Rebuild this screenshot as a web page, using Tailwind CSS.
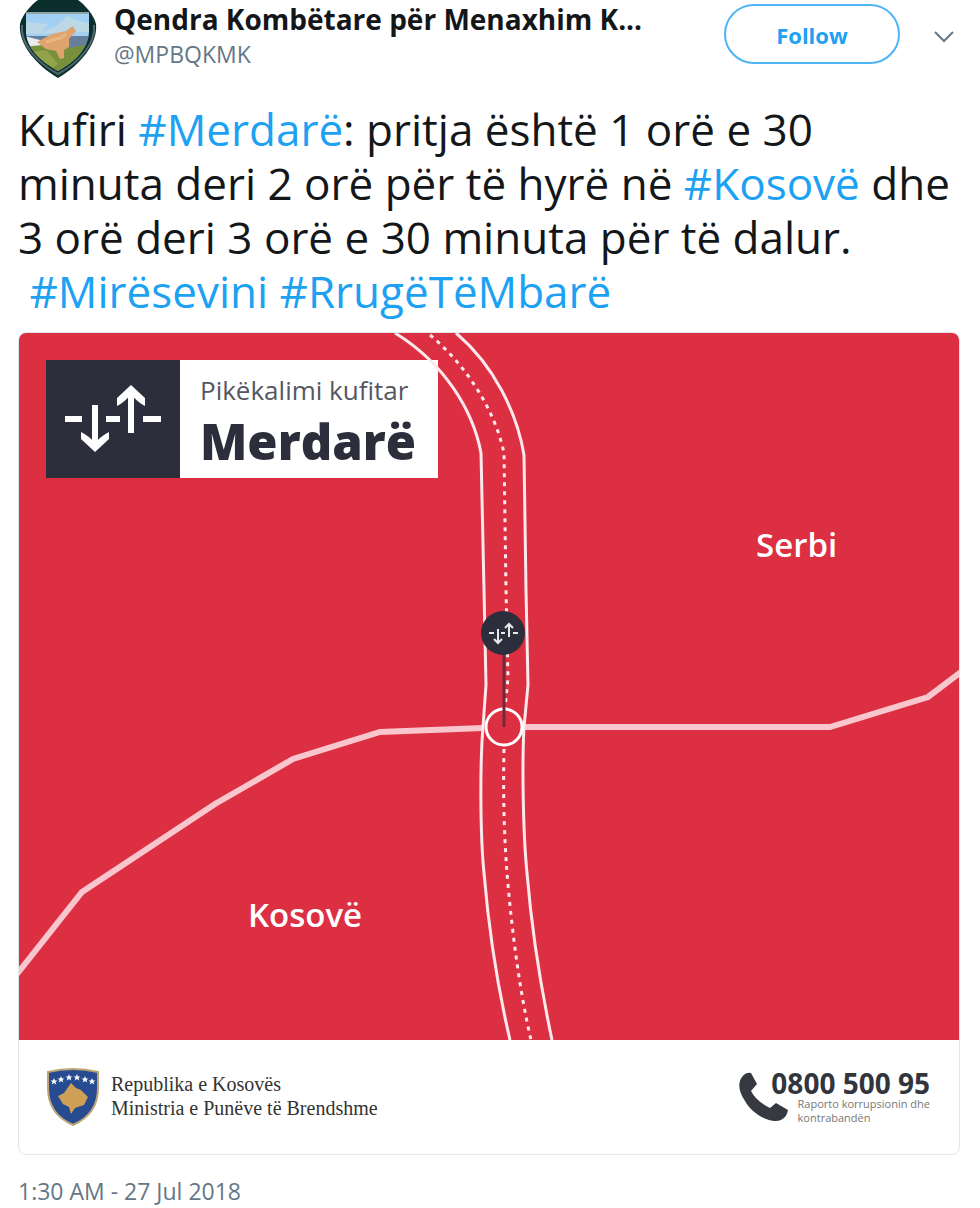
<!DOCTYPE html>
<html lang="sq">
  <head>
    <meta charset="UTF-8" />
    <meta name="viewport" content="width=device-width, initial-scale=1.0" />
    <title>Qendra Kombëtare për Menaxhim Kufitar</title>
    <script src="https://cdn.jsdelivr.net/npm/@tailwindcss/browser@4"></script>
  </head>
  <body class="bg-white text-[#14171a] font-['Open_Sans','Noto_Sans',sans-serif]">
    <article class="pl-[18px] pr-5">
      <!-- Account header -->
      <header class="flex items-start pr-1">
        <svg class="w-20 h-20 shrink-0" viewBox="0 0 80 80" aria-hidden="true">
          <path d="M20 0H60C67 5 76 15 78 24C80 44 62 65 40 78C18 65 0 44 2 24C4 15 13 5 20 0Z" fill="#0b2f2d" />
          <path d="M4 25C2 43 18 62 40 74C62 62 78 43 76 25" fill="none" stroke="#50686b" stroke-width="2" />
          <clipPath id="badge"><path d="M8 13H71V32C70 48 58 61 40 71C22 61 9 48 8 32Z" /></clipPath>
          <g clip-path="url(#badge)">
            <path d="M0 10H80V80H0Z" fill="#a2d0f2" />
            <path d="M8 22L30 24L24 32L38 26L50 16L58 20L73 24V32L46 33L8 34Z" fill="#bcd8e6" />
            <path d="M8 36H75V50H8Z" fill="#66809b" />
            <path d="M6 36L22 40L30 50L10 48Z" fill="#e9edef" />
            <path d="M4 47L25 45L50 48L74 44V80H4Z" fill="#78903b" />
            <path d="M14 52L28 50L40 64L32 70Z" fill="#93a349" />
            <path d="M19 42L34 34L48 31L55 26L58 31L51 39V47L46 50L46 58L42 59L38 51L28 49Z" fill="#dfa46d" />
            <path d="M28 42L42 38L48 34" fill="none" stroke="#e8b683" stroke-width="3" />
          </g>
          <path d="M8 13H71" stroke="#8fa3a5" stroke-width="2" />
        </svg>
        <div class="min-w-0 flex-1 pl-4">
          <h1 class="truncate text-[28px] leading-[38px] font-bold">Qendra Kombëtare për Menaxhim K...</h1>
          <p class="text-[23px] leading-8 text-[#657786]">@MPBQKMK</p>
        </div>
        <button type="button" class="mt-1 h-[60px] w-44 shrink-0 rounded-full border-2 border-[#4db5f5] pt-0.5 text-[22px] font-bold text-[#1da1f2]">Follow</button>
        <button type="button" class="mt-6 ml-8 shrink-0" aria-label="More">
          <svg class="w-6 h-6" viewBox="0 0 24 24" fill="none" stroke="#657786" stroke-width="2">
            <path d="M3 8L12 17L21 8" />
          </svg>
        </button>
      </header>

      <p class="mt-[22px] text-[44px] leading-[54px]">
        Kufiri <a href="#" class="text-[#1da1f2]">#Merdarë</a>: pritja është 1 orë e 30<br />
        minuta deri 2 orë për të hyrë në <a href="#" class="text-[#1da1f2]">#Kosovë</a> dhe<br />
        3 orë deri 3 orë e 30 minuta për të dalur.<br />
        &nbsp;<a href="#" class="text-[#1da1f2]">#Mirësevini</a> <a href="#" class="text-[#1da1f2]">#RrugëTëMbarë</a>
      </p>

      <!-- Attached picture -->
      <figure class="mt-3.5 overflow-hidden rounded-lg border border-[#e1e8ed]">
        <svg class="block w-full" viewBox="0 0 940 707">
          <rect width="940" height="707" fill="#dc2f42" />

          <!-- name plate -->
          <rect x="27" y="27" width="134" height="118" fill="#2d2e3b" />
          <rect x="161" y="27" width="258" height="118" fill="#fff" />
          <path d="M46 86H63M87 86H101M124 86H142M76 72V112M112 100V59" stroke="#fff" stroke-width="6" />
          <path d="M76 119L62 106V99Q70 103 76 110Q82 103 90 99V106Z" fill="#fff" />
          <path d="M112 52L98 65V73Q106 69 112 61Q118 69 126 73V65Z" fill="#fff" />
          <text x="181" y="67" font-size="26" fill="#555762">Pikëkalimi kufitar</text>
          <text x="181" y="127" font-size="49" font-weight="800" fill="#2d2e3b">Merdarë</text>

          <!-- border line -->
          <g fill="none" stroke="#f9c6ce" stroke-width="6">
            <path d="M-2 641L63 559L196 471L274 426L361 399L464 395" />
            <path d="M505 394H811L909 364L942 339" />
          </g>

          <!-- road -->
          <g fill="none" stroke="#fde8eb" stroke-width="3">
            <path d="M376 0C425 30 454 77 462 120L465 257L467 352L464 394C461 430 461 500 465 540C470 600 480 660 491 707" />
            <path d="M437 0C475 32 498 80 505 122L507 257L509 352L505 394C503 430 504 500 508 540C513 600 523 660 533 707" />
            <path d="M411 2C447 32 476 77 485 120L487 257L489 345L486 375M485 416C484 460 485 500 488 540C493 600 501 660 512 707" stroke-dasharray="4 5" />
          </g>

          <!-- crossing marker -->
          <circle cx="485" cy="394" r="18" fill="#dc2f42" stroke="#fff" stroke-width="3" />
          <path d="M485 320V394" stroke="#722838" stroke-width="3" />
          <circle cx="484" cy="300" r="22" fill="#2d2e3b" />
          <g fill="none" stroke="#e8e8ea" stroke-width="2">
            <path d="M470 300H475M482 300H486M494 300H499" />
            <path d="M479 296V309M475 306L479 310L483 306" />
            <path d="M490 304V291M486 295L490 291L494 295" />
          </g>

          <text x="737" y="224" font-size="33" font-weight="600" fill="#fff">Serbi</text>
          <text x="229" y="594" font-size="33" font-weight="600" fill="#fff">Kosovë</text>
        </svg>

        <figcaption class="flex items-center justify-between pt-7 pr-[29px] pb-7 pl-7">
          <div class="flex items-center gap-3">
            <svg class="w-[52px] h-[58px]" viewBox="0 0 52 58" aria-hidden="true">
              <path d="M1 4Q26 -2 51 4V20C51 38 42 50 26 57C10 50 1 38 1 20Z" fill="#264b91" stroke="#bda578" stroke-width="2" />
              <path d="M24 15L29 20L34 22L41 29L37 37L28 40L24 46L22 39L16 36L11 28L17 25Z" fill="#cda055" />
              <g fill="#fff">
                <path id="star" d="M7 10L8 12.500L10.500 12.500L8.500 14L9.300 16.500L7 15L4.700 16.500L5.500 14L3.500 12.500L6 12.500Z" />
                <use href="#star" x="7" y="-2" />
                <use href="#star" x="15" y="-4" />
                <use href="#star" x="23" y="-4" />
                <use href="#star" x="31" y="-2" />
                <use href="#star" x="38" />
              </g>
            </svg>
            <p class="pb-0.5 font-['Liberation_Serif',serif] text-xl leading-6 text-[#333]">Republika e Kosovës<br />Ministria e Punëve të Brendshme</p>
          </div>
          <div class="flex items-center">
            <svg class="w-[50px] h-[50px]" viewBox="0 0 50 50" aria-hidden="true">
              <path d="M3 5Q7 0 12 1L18 12L12 19Q17 29 31 36L37 31L49 38Q48 45 42 48C31 52 13 42 6 29C-1 19 -1 10 3 5Z" fill="#373941" />
            </svg>
            <div class="-ml-[18px] flex flex-col items-end">
              <strong class="text-[28px] leading-7 text-[#33353e]">0800 500 95</strong>
              <p class="text-[11px] leading-[14px] text-[#777]">Raporto korrupsionin dhe<br />kontrabandën</p>
            </div>
          </div>
        </figcaption>
      </figure>

      <p class="mt-[18px] text-[23px] leading-9 text-[#657786]"><time datetime="2018-07-27T01:30">1:30 AM - 27 Jul 2018</time></p>
    </article>
  </body>
</html>
